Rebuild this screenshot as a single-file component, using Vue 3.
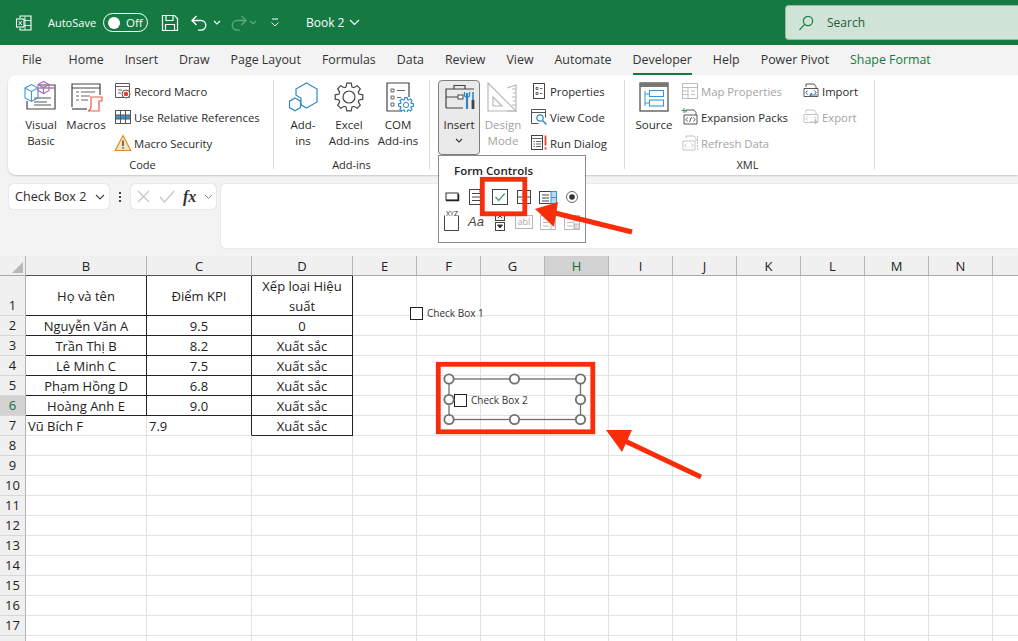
<script setup>
const tabs = ['File', 'Home', 'Insert', 'Draw', 'Page Layout', 'Formulas', 'Data', 'Review', 'View', 'Automate', 'Developer', 'Help', 'Power Pivot', 'Shape Format']

// O is only a sliver at the right edge, so its heading stays empty
const columns = ['B', 'C', 'D', 'E', 'F', 'G', 'H', 'I', 'J', 'K', 'L', 'M', 'N', '']

// only rows 1-7 hold data, the rest of the sheet is empty
const tableRows = [
  ['Họ và tên', 'Điểm KPI', 'Xếp loại Hiệu suất'],
  ['Nguyễn Văn A', '9.5', '0'],
  ['Trần Thị B', '8.2', 'Xuất sắc'],
  ['Lê Minh C', '7.5', 'Xuất sắc'],
  ['Phạm Hồng D', '6.8', 'Xuất sắc'],
  ['Hoàng Anh E', '9.0', 'Xuất sắc'],
  ['Vũ Bích F', '7.9', 'Xuất sắc']
]

const rows = Array.from({ length: 18 }, (_, i) => i + 1)

const cellText = (row, col) => {
  const data = tableRows[row - 1]
  return data && col < 3 ? data[col] : ''
}

const cellClass = (row, col) => {
  const list = []
  if (row <= 6 && col < 3) list.push('cell--framed', 'cell--center')
  if (row === 7 && col === 2) list.push('cell--framed', 'cell--center')
  if (row === 7 && col === 1) list.push('cell--edge')
  if (row === 7 && col < 2) list.push('cell--left')
  if (row === 1 && col < 2) list.push('cell--middle')
  return list
}

// gear outline used by the add-in icons
const gearPath = (cx, cy, outer, inner, teeth) => {
  const pts = []
  const step = (Math.PI * 2) / teeth
  for (let i = 0; i < teeth; i++) {
    const a = i * step - Math.PI / 2
    const spots = [[-0.3, inner], [-0.16, outer], [0.16, outer], [0.3, inner]]
    spots.forEach(([off, r]) => {
      const t = a + off * step * 1.25
      pts.push((cx + Math.cos(t) * r).toFixed(1) + ' ' + (cy + Math.sin(t) * r).toFixed(1))
    })
  }
  return 'M' + pts.join('L') + 'Z'
}

const bigGear = gearPath(18, 17, 14, 10.5, 8)
const smallGear = gearPath(26, 25, 7.5, 5.5, 8)

const handles = [
  [449, 379], [514.5, 379], [580.5, 379],
  [449, 399.5], [580.5, 399.5],
  [449, 419.5], [514.5, 419.5], [580.5, 419.5]
]
</script>

<template>
  <div class="app">
    <header class="titlebar">
      <svg class="titlebar__logo" width="18" height="18" viewBox="0 0 18 18" fill="none" stroke="#fff" stroke-width="1.1">
        <path d="M5 4V2h11v14H5v-2" />
        <path d="M10 2v14M5 6.5h11M5 11.5h11" stroke-width=".8" />
        <rect x="1.5" y="5" width="7.5" height="8" fill="#147a42" />
        <path d="M3.8 7.2l3 3.8M6.8 7.2l-3 3.8" stroke-width="1" />
      </svg>
      <span class="titlebar__autosave">AutoSave</span>
      <div class="toggle"><span class="toggle__dot"></span><span>Off</span></div>
      <svg class="titlebar__save" width="18" height="18" viewBox="0 0 18 18" fill="none" stroke="#fff" stroke-width="1.2">
        <path d="M1.5 1.5h12l3 3v12h-15z" />
        <path d="M5 1.5v5h7v-5M4.5 16.5v-6h9v6" />
      </svg>
      <svg class="titlebar__undo" width="18" height="18" viewBox="0 0 18 18" fill="none" stroke="#fff" stroke-width="1.4">
        <path d="M6.5 2L2 6.5l4.5 4.5M2 6.5h9a4.8 4.8 0 0 1 0 9.6H8" />
      </svg>
      <svg class="titlebar__caret" width="8" height="5" viewBox="0 0 8 5" fill="none" stroke="#fff" stroke-width="1.1"><path d="M1 1l3 3 3-3" /></svg>
      <svg class="titlebar__redo" width="18" height="18" viewBox="0 0 18 18" fill="none" stroke="#5fa77f" stroke-width="1.4">
        <path d="M11.5 2L16 6.5 11.5 11M16 6.5H7a4.8 4.8 0 0 0 0 9.6h3" />
      </svg>
      <svg class="titlebar__caret titlebar__caret--dim" width="8" height="5" viewBox="0 0 8 5" fill="none" stroke="#5fa77f" stroke-width="1.1"><path d="M1 1l3 3 3-3" /></svg>
      <svg class="titlebar__more" width="10" height="9" viewBox="0 0 10 9" fill="none" stroke="#fff" stroke-width="1"><path d="M2 1h6" /><path d="M1.5 4.5L5 8l3.5-3.5" /></svg>
      <span class="titlebar__book">Book 2</span>
      <svg class="titlebar__chev" width="11" height="7" viewBox="0 0 11 7" fill="none" stroke="#fff" stroke-width="1.2"><path d="M1 1l4.5 4.5L10 1" /></svg>
      <div class="search">
        <svg width="16" height="16" viewBox="0 0 16 16" fill="none" stroke="#1a7a45" stroke-width="1.2">
          <circle cx="10" cy="6" r="4.6" />
          <path d="M6.6 9.4L1.5 14.8" />
        </svg>
        <span>Search</span>
      </div>
    </header>

    <nav class="tabs">
      <span v-for="tab in tabs" :key="tab" class="tabs__item" :class="{ 'tabs__item--active': tab === 'Developer', 'tabs__item--shape': tab === 'Shape Format', 'tabs__item--file': tab === 'File' }">{{ tab }}</span>
    </nav>

    <section class="ribbon">
      <div class="group group--code">
        <div class="group__body">
          <div class="big big--vb">
            <svg width="36" height="32" viewBox="0 0 36 32" fill="none">
              <path d="M15 5h17v24H4V21" stroke="#444" stroke-width="1.2" />
              <path d="M16 8h15M11 18h17M11 22h13M11 25h17" stroke="#555" />
              <path d="M2 8l6.5-3.5L15 8v10l-6.5 3.5L2 18zM2 8l6.5 3.5L15 8M8.5 11.5v10" stroke="#3a96d4" stroke-width="1.1" />
              <path d="M15 4.5L20.5 1.5 26 4.5v6l-5.5 3L15 10.5zM15 4.5l5.5 3 5.5-3M20.5 7.5v6" stroke="#b162c6" stroke-width="1.1" />
            </svg>
            <span>Visual<br />Basic</span>
          </div>
          <div class="big big--macros">
            <svg width="36" height="32" viewBox="0 0 36 32" fill="none">
              <path d="M4 27V4h28v11" stroke="#444" stroke-width="1.2" />
              <path d="M4 8h28" stroke="#444" />
              <path d="M8 12h3M13 12h14M8 16h3M13 16h9M8 20h3M13 20h7" stroke="#666" />
              <path d="M4 29h15" stroke="#444" stroke-width="1.2" />
              <path d="M23 17h11v4h-3v10H20c2-1 3-2 3-4z" stroke="#ef5a4a" stroke-width="1.2" fill="#fff" />
            </svg>
            <span>Macros</span>
          </div>
          <div class="small-list small-list--code">
            <div class="small">
              <svg width="18" height="18" viewBox="0 0 18 18" fill="none">
                <path d="M1.5 1.5h14v14h-14z" stroke="#555" />
                <path d="M1.5 4.5h14M4 8h4M4 11h3" stroke="#666" />
                <circle cx="12" cy="12" r="4" fill="#fff" stroke="#555" />
                <circle cx="12" cy="12" r="2.3" fill="#e8412e" />
              </svg>
              <span>Record Macro</span>
            </div>
            <div class="small">
              <svg width="18" height="18" viewBox="0 0 18 18" fill="none">
                <rect x="1.5" y="2.5" width="15" height="13" stroke="#555" />
                <rect x="2" y="7" width="14" height="4" fill="#3f8fd2" />
                <path d="M6.5 2.5v13M11.5 2.5v13M1.5 7h15M1.5 11h15" stroke="#555" />
              </svg>
              <span>Use Relative References</span>
            </div>
            <div class="small">
              <svg width="18" height="18" viewBox="0 0 18 18" fill="none">
                <path d="M9 1.5L16.8 16.5H1.2z" fill="#fbe3b8" stroke="#d98a28" stroke-width="1.1" />
                <path d="M9 6.5v5.5M9 13.2v1.6" stroke="#333" stroke-width="1.3" />
              </svg>
              <span>Macro Security</span>
            </div>
          </div>
        </div>
        <div class="group__label group__label--code">Code</div>
      </div>

      <div class="group group--addins">
        <div class="group__body">
          <div class="big big--addin">
            <svg width="36" height="32" viewBox="0 0 36 32" fill="none" stroke="#2f87c9" stroke-width="1.2">
              <path d="M21.5 3L32 9v13l-10.5 6-5.500-3.200V18l-5-2.800V9z" />
              <path d="M10 18l5.500 3.200v6.400L10 30.800l-5.500-3.200v-6.400z" />
            </svg>
            <span>Add-<br />ins</span>
          </div>
          <div class="big big--addin">
            <svg width="36" height="32" viewBox="0 0 36 32" fill="none" stroke="#444" stroke-width="1.2">
              <path :d="bigGear" />
              <circle cx="18" cy="17" r="6" />
            </svg>
            <span>Excel<br />Add-ins</span>
          </div>
          <div class="big big--com">
            <svg width="36" height="32" viewBox="0 0 36 32" fill="none">
              <path d="M22 31H7V3h22v14" stroke="#444" stroke-width="1.2" />
              <path d="M11 9h3v3h-3zM11 16h3v3h-3zM11 23h3v3h-3zM17 10.5h8M17 17.5h4" stroke="#666" />
              <path :d="smallGear" stroke="#2f87c9" stroke-width="1.1" fill="#fff" />
              <circle cx="26" cy="25" r="2.6" stroke="#2f87c9" />
            </svg>
            <span>COM<br />Add-ins</span>
          </div>
        </div>
        <div class="group__label">Add-ins</div>
      </div>

      <div class="group group--dev">
        <div class="group__body">
          <div class="insert">
            <svg width="36" height="32" viewBox="0 0 36 32" fill="none">
              <path d="M13 8V4.500h11V8" stroke="#444" stroke-width="1.2" />
              <path d="M5 27V8h28M5 27h17M5 16h14" stroke="#444" stroke-width="1.2" />
              <rect x="17" y="14" width="5" height="4" fill="#fff" stroke="#444" />
              <path d="M26 12v6M26 18v10" stroke="#2f87c9" stroke-width="2.2" />
              <path d="M23.5 11v4l2.5 2 2.5-2v-4" stroke="#2f87c9" stroke-width="1.3" />
              <path d="M32 11v8" stroke="#2f87c9" stroke-width="1.6" />
              <path d="M32 19v9" stroke="#444" stroke-width="2.8" />
            </svg>
            <span>Insert</span>
            <svg class="insert__caret" width="8" height="5" viewBox="0 0 8 5" fill="none" stroke="#333" stroke-width="1.1"><path d="M1 1l3 3 3-3" /></svg>
          </div>
          <div class="big big--design is-disabled">
            <svg width="36" height="32" viewBox="0 0 36 32" fill="none" stroke="#b5b5b5" stroke-width="1.1">
              <path d="M3 3l28 28H3z" />
              <path d="M8 17l9 9H8z" />
              <path d="M22 8l9-3v26h-9" />
              <path d="M27 9h4M28 13h3M27 17h4M28 21h3M27 25h4" />
            </svg>
            <span>Design<br />Mode</span>
          </div>
          <div class="small-list small-list--dev">
            <div class="small">
              <svg width="18" height="18" viewBox="0 0 18 18" fill="none" stroke="#444">
                <rect x="3.5" y="1.5" width="11" height="15" />
                <path d="M6 5.500h2v2H6zM6 10.500h2v2H6zM10 6.500h2.500M10 11.500h2.500" stroke-width=".8" />
              </svg>
              <span>Properties</span>
            </div>
            <div class="small">
              <svg width="18" height="18" viewBox="0 0 18 18" fill="none">
                <path d="M1.5 15.5v-14h14v8" stroke="#555" />
                <path d="M1.5 4.5h14M1.5 15.5h7" stroke="#555" />
                <circle cx="10" cy="10" r="3.2" stroke="#2f87c9" stroke-width="1.2" />
                <path d="M12.5 12.5l4 4" stroke="#2f87c9" stroke-width="1.5" />
              </svg>
              <span>View Code</span>
            </div>
            <div class="small">
              <svg width="18" height="18" viewBox="0 0 18 18" fill="none">
                <rect x="1.5" y="1.5" width="11" height="14" stroke="#444" />
                <path d="M1.5 4.5h11M3.5 7.5h1.5M6 7.5h5M3.500 10h1.500M6 10h5M3.5 12.5h1.5M6 12.5h5" stroke="#666" />
                <path d="M15.5 1.5v10M15.5 13.2v2.3" stroke="#e8412e" stroke-width="1.8" />
              </svg>
              <span>Run Dialog</span>
            </div>
          </div>
        </div>
        <div class="group__label"></div>
      </div>

      <div class="group group--xml">
        <div class="group__body">
          <div class="big big--source">
            <svg width="36" height="32" viewBox="0 0 36 32" fill="none">
              <rect x="4" y="3" width="28" height="28" stroke="#444" stroke-width="1.2" />
              <rect x="4" y="3" width="28" height="4" fill="#777" />
              <path d="M9 11v15M9 14h5M9 23h5" stroke="#3a96d4" />
              <rect x="13.5" y="10.5" width="14" height="6" stroke="#3a96d4" stroke-width="1.1" />
              <rect x="13.5" y="20" width="14" height="6" stroke="#3a96d4" stroke-width="1.1" />
            </svg>
            <span>Source</span>
          </div>
          <div class="small-list small-list--xml">
            <div class="small is-disabled">
              <svg width="18" height="18" viewBox="0 0 18 18" fill="none" stroke="#bdbdbd">
                <rect x="1.5" y="1.5" width="15" height="15" />
                <path d="M1.5 5.5h15M7 5.5v11M1.5 9h5.500M1.5 12.5h5.500M10 9h4M10 12.5h4" />
              </svg>
              <span>Map Properties</span>
            </div>
            <div class="small">
              <svg width="18" height="18" viewBox="0 0 18 18" fill="none" stroke="#444">
                <path d="M5 4.5V2h8l2 2.5V7M3 7h13v9H3z" stroke-width=".9" />
                <path d="M6.5 9.5L5 11.5l1.500 2M12.500 9.500l1.500 2-1.500 2M10.500 9l-2 5" stroke-width=".9" />
                <path d="M3 0v5M.5 2.500h5" stroke="#2c9a5a" stroke-width="1" />
              </svg>
              <span>Expansion Packs</span>
            </div>
            <div class="small is-disabled">
              <svg width="18" height="18" viewBox="0 0 18 18" fill="none" stroke="#bdbdbd">
                <path d="M5 4.5V2h8l2 2.5V7M2 7h12v9H2z" stroke-width=".9" />
                <path d="M5.5 9.5L4 11.5l1.500 2M10.500 9.500l1.500 2-1.500 2" stroke-width=".9" />
                <path d="M16.5 2v14" stroke-dasharray="2 1" />
              </svg>
              <span>Refresh Data</span>
            </div>
          </div>
          <div class="small-list small-list--xml2">
            <div class="small">
              <svg width="18" height="18" viewBox="0 0 18 18" fill="none" stroke="#444">
                <path d="M4 5V2h8l2 2.500V7M2 6.500h14v8H2z" stroke-width=".9" />
                <path d="M5.5 8.5L4 10.5l1.500 2M12.500 8.500l1.500 2-1.500 2" stroke-width=".9" />
                <path d="M15 13H8M10 11l-2 2 2 2" stroke="#2f87c9" stroke-width="1.1" />
              </svg>
              <span>Import</span>
            </div>
            <div class="small is-disabled">
              <svg width="18" height="18" viewBox="0 0 18 18" fill="none" stroke="#bdbdbd">
                <path d="M4 5V2h8l2 2.500V7M2 6.500h14v8H2z" stroke-width=".9" />
                <path d="M5.5 8.5L4 10.5l1.500 2M12.500 8.500l1.500 2-1.500 2" stroke-width=".9" />
                <path d="M8 14h7M13 12l2 2-2 2" stroke-width="1.1" />
              </svg>
              <span>Export</span>
            </div>
          </div>
        </div>
        <div class="group__label group__label--xml">XML</div>
      </div>
    </section>

    <section class="formula">
      <div class="namebox">
        <span>Check Box 2</span>
        <svg width="10" height="6" viewBox="0 0 10 6" fill="none" stroke="#444" stroke-width="1.1"><path d="M1 1l4 4 4-4" /></svg>
      </div>
      <div class="formula__dots"><i></i><i></i><i></i></div>
      <div class="fxbox">
        <svg width="15" height="15" viewBox="0 0 15 15" fill="none" stroke="#c4c4c4" stroke-width="1.2"><path d="M2 2l11 11M13 2L2 13" /></svg>
        <svg width="16" height="15" viewBox="0 0 16 15" fill="none" stroke="#c4c4c4" stroke-width="1.2"><path d="M1 8l4.500 5L15 2" /></svg>
        <span class="fxbox__fx">fx</span>
        <svg width="9" height="6" viewBox="0 0 9 6" fill="none" stroke="#888" stroke-width="1"><path d="M1 1l3.500 3.500L8 1" /></svg>
      </div>
      <div class="formula__input"></div>
    </section>

    <section class="sheet">
      <div class="corner"><span class="corner__tri"></span></div>
      <div v-for="col in columns" :key="col" class="colhead" :class="{ 'colhead--on': col === 'H', 'colhead--dark': col === 'B' || col === 'C' || col === 'D' }">{{ col }}</div>
      <template v-for="row in rows" :key="row">
        <div class="rowhead" :class="{ 'rowhead--tall': row === 1, 'rowhead--on': row === 6 }">{{ row < 18 ? row : '' }}</div>
        <div
          v-for="(col, idx) in columns"
          :key="col"
          class="cell"
          :class="[cellClass(row, idx), { 'cell--tall': row === 1 }]"
        ><span>{{ cellText(row, idx) }}</span></div>
      </template>

      <label class="checkbox checkbox--one"><span class="checkbox__box"></span>Check Box 1</label>
      <label class="checkbox checkbox--two"><span class="checkbox__box"></span>Check Box 2</label>
    </section>

    <div class="dropdown">
      <div class="dropdown__title">Form Controls</div>
      <div class="dropdown__grid">
        <span><svg width="20" height="20" viewBox="0 0 20 20" fill="none"><rect x="4" y="6" width="12" height="7" stroke="#333" /><path d="M4 13.5h12.5V7" stroke="#222" stroke-width="1.5" /></svg></span>
        <span><svg width="20" height="20" viewBox="0 0 20 20" fill="none" stroke="#444"><rect x="3.5" y="2.5" width="13" height="15" /><path d="M6 6.5h8M6 10h8M6 13.5h8" /><path d="M14 2.5h2.5v3H14z" fill="#444" /></svg></span>
        <span><svg width="20" height="20" viewBox="0 0 20 20" fill="none"><rect x="2.5" y="2.5" width="15" height="15" stroke="#444" /><path d="M5.5 10l3.2 3.5 6-7" stroke="#3fa06a" stroke-width="1.2" /></svg></span>
        <span><svg width="20" height="20" viewBox="0 0 20 20" fill="none" stroke="#444"><rect x="3.5" y="3.5" width="13" height="13" /><path d="M3.5 10h13" /><path d="M8 7.5l2-2 2 2M8 12.5l2 2 2-2" /></svg></span>
        <span><svg width="20" height="20" viewBox="0 0 20 20" fill="none" stroke="#444"><rect x="1.5" y="4.5" width="17" height="12" /><path d="M4 8h7M4 11h7M4 14h7" /><rect x="13" y="4.5" width="5.5" height="12" fill="#bcd8ee" stroke="#3a96d4" /><path d="M13 10.5h5.500" stroke="#3a96d4" /></svg></span>
        <span><svg width="20" height="20" viewBox="0 0 20 20" fill="none"><circle cx="10" cy="10" r="5.5" stroke="#666" /><circle cx="10" cy="10" r="2.8" fill="#333" /></svg></span>

        <span class="dropdown__xyz"><svg width="20" height="20" viewBox="0 0 20 20" fill="none" stroke="#444"><path d="M2.500 3.500V18.500h14V3.500" /></svg><em>XYZ</em></span>
        <span class="dropdown__aa">Aa</span>
        <span><svg width="20" height="20" viewBox="0 0 20 20" fill="none" stroke="#444"><rect x="5.5" y="1.5" width="9" height="7" fill="#f1f1f1" /><path d="M8 6l2-2 2 2" /><rect x="5.5" y="10.5" width="9" height="8" /><path d="M7.500 13h5L10 16z" fill="#222" /></svg></span>
        <span class="is-dim"><svg width="20" height="20" viewBox="0 0 20 20" fill="none" stroke="#b5b5b5"><rect x="1.5" y="3.5" width="17" height="13" /></svg><em class="dropdown__abl">abl</em></span>
        <span class="is-dim"><svg width="20" height="20" viewBox="0 0 20 20" fill="none" stroke="#bbb"><rect x="2.5" y="3.5" width="15" height="14" /><path d="M5 7h6M5 10.500h6M5 14h6M13 3.500v14" /><path d="M13.500 4h4v3h-4z" fill="#ddd" /></svg></span>
        <span class="is-dim"><svg width="20" height="20" viewBox="0 0 20 20" fill="none" stroke="#bbb"><rect x="2.5" y="3.5" width="15" height="14" /><path d="M5 7h6M5 10.500h6M5 14h6M12 3.500v14" /><path d="M12.500 4h5v5h-5zM12.500 12h5v5h-5z" fill="#ddd" /></svg></span>
      </div>
    </div>

    <svg class="marks" width="1018" height="641" viewBox="0 0 1018 641" fill="none">
      <!-- selection frame of Check Box 2 -->
      <rect x="449" y="379" width="131.5" height="40.5" stroke="#6f6f6f" stroke-width="1.3" />
      <circle v-for="h in handles" :key="h.join()" :cx="h[0]" :cy="h[1]" r="4.7" fill="#fff" stroke="#6f6f6f" stroke-width="1.8" />
      <!-- red call-outs -->
      <rect x="482.3" y="179.3" width="42.5" height="34.5" stroke="#fa2d0a" stroke-width="4.8" />
      <rect x="438.3" y="364.3" width="154.5" height="67.5" stroke="#fa2d0a" stroke-width="4.8" />
      <path d="M632 232L555 213" stroke="#fa2d0a" stroke-width="5" />
      <path d="M535 209L558 202L554 227Z" fill="#fa2d0a" />
      <path d="M701 477L625 441" stroke="#fa2d0a" stroke-width="5" />
      <path d="M606 430L632 430L622 452Z" fill="#fa2d0a" />
    </svg>
  </div>
</template>

<style>
html,
body {
  margin: 0;
  background: #f3f3f3;
}
</style>

<style scoped>
.app {
  position: relative;
  width: 1018px;
  height: 641px;
  overflow: hidden;
  background: #f3f3f3;
  font-family: "Open Sans", "Noto Sans", sans-serif;
  font-size: 12px;
  color: #2b2b2b;
}

/* title bar */
.titlebar {
  display: flex;
  align-items: center;
  height: 45px;
  padding-left: 15px;
  background: #147a42;
  color: #fff;
  box-sizing: border-box;
}

.titlebar__logo {
  margin-right: 15px;
}

.titlebar__autosave {
  width: 50px;
  font-size: 11px;
}

.toggle {
  display: flex;
  align-items: center;
  gap: 6px;
  width: 45px;
  height: 19px;
  margin-left: 5px;
  padding-left: 4px;
  box-sizing: border-box;
  border: 1px solid #fff;
  border-radius: 10px;
  font-size: 11.5px;
}

.toggle__dot {
  width: 12px;
  height: 12px;
  border-radius: 50%;
  background: #fff;
}

.titlebar__save {
  margin-left: 13px;
}

.titlebar__undo {
  margin-left: 11px;
}

.titlebar__caret {
  margin-left: 5px;
}

.titlebar__caret--dim {
  margin-left: 1px;
}

.titlebar__redo {
  margin-left: 9px;
}

.titlebar__more {
  margin-left: 13px;
}

.titlebar__book {
  margin-left: 26px;
  font-size: 12px;
}

.titlebar__chev {
  margin-left: 5px;
}

.search {
  display: flex;
  align-items: center;
  gap: 13px;
  width: 233px;
  height: 35px;
  margin-left: auto;
  padding-left: 12px;
  box-sizing: border-box;
  border: 1px solid #98b9a6;
  border-right: 0;
  border-radius: 4px 0 0 4px;
  background: #cfe3d7;
  color: #1f5c3a;
  font-size: 12px;
}

/* tabs */
.tabs {
  display: flex;
  align-items: center;
  gap: 21px;
  height: 30px;
  padding-left: 22px;
  font-size: 12.4px;
  color: #333;
}

.tabs__item {
  position: relative;
  line-height: 30px;
}

.tabs__item--file {
  margin-right: 6px;
}

.tabs__item--active {
  font-weight: 500;
}

.tabs__item--active::after {
  content: "";
  position: absolute;
  left: 0;
  right: 0;
  bottom: 0;
  height: 2px;
  background: #147a42;
}

.tabs__item--shape {
  color: #147a42;
}

/* ribbon */
.ribbon {
  display: flex;
  height: 100px;
  margin-left: 8px;
  padding-top: 5px;
  box-sizing: border-box;
  border-radius: 8px 0 0 8px;
  background: #fff;
  box-shadow: 0 1px 2px rgba(0, 0, 0, 0.18);
}

.group {
  position: relative;
  display: flex;
  flex-direction: column;
  height: 89px;
  box-sizing: border-box;
  border-right: 1px solid #dadada;
}

.group--code {
  width: 266px;
}

.group--addins {
  width: 156px;
}

.group--dev {
  width: 195px;
}

.group--xml {
  width: 250px;
}

.group__body {
  display: flex;
  flex: 1;
}

/* the label sits a little below the end of the separator */
.group__label {
  height: 17px;
  margin-bottom: -4px;
  line-height: 17px;
  text-align: center;
  font-size: 11px;
}

.group__label--code {
  padding-left: 4px;
}

.group__label--xml {
  position: absolute;
  left: 62px;
  bottom: 0;
  width: 121px;
}

.group--code .group__body {
  padding-left: 10px;
}

.group--addins .group__body {
  padding-left: 6px;
}

.group--dev .group__body {
  padding-left: 8px;
}

.group--xml .group__body {
  padding-left: 4px;
}

.big {
  display: flex;
  flex-direction: column;
  align-items: center;
  text-align: center;
  line-height: 16px;
  font-size: 11.5px;
}

.big span {
  margin-top: 5px;
}

.big--vb,
.big--addin {
  width: 46px;
}

.big--macros {
  width: 44px;
}

.big--com {
  width: 52px;
}

.big--design {
  width: 44px;
  margin-left: 1px;
}

.big--source {
  width: 50px;
}

.is-disabled {
  color: #a3a3a3;
}

.insert {
  display: flex;
  flex-direction: column;
  align-items: center;
  width: 42px;
  height: 75px;
  box-sizing: border-box;
  border: 1px solid #7d7d7d;
  border-radius: 4px;
  background: #eaeaea;
  font-size: 11.5px;
  line-height: 16px;
}

.insert span {
  margin-top: 4px;
}

.insert__caret {
  margin-top: 5px;
}

.small-list {
  display: flex;
  flex-direction: column;
  gap: 8px;
  padding-top: 2px;
}

.small-list--code {
  margin-left: 6px;
}

.small-list--dev {
  margin-left: 5px;
}

.small-list--xml {
  margin-left: 2px;
  width: 121px;
}

.small {
  display: flex;
  align-items: center;
  gap: 2px;
  height: 18px;
  white-space: nowrap;
  font-size: 11.3px;
}

/* formula bar */
.formula {
  display: flex;
  height: 65px;
  margin-top: 9px;
  padding-left: 9px;
  box-sizing: border-box;
}

.namebox {
  display: flex;
  align-items: center;
  justify-content: space-between;
  width: 100px;
  height: 25px;
  padding: 0 4px 0 6px;
  box-sizing: border-box;
  border-radius: 4px;
  background: #fff;
  box-shadow: 0 0 1px rgba(0, 0, 0, 0.35);
  font-size: 12.6px;
}

.formula__dots {
  display: flex;
  flex-direction: column;
  gap: 2px;
  width: 22px;
  height: 25px;
  align-items: center;
  justify-content: center;
}

.formula__dots i {
  width: 2px;
  height: 2px;
  background: #444;
}

.fxbox {
  display: flex;
  align-items: center;
  gap: 8px;
  width: 85px;
  height: 25px;
  padding-left: 5px;
  box-sizing: border-box;
  border-radius: 4px;
  background: #fff;
  box-shadow: 0 0 1px rgba(0, 0, 0, 0.35);
}

.fxbox__fx {
  font-family: "Liberation Serif", serif;
  font-style: italic;
  font-weight: 700;
  font-size: 16px;
  color: #333;
}

.formula__input {
  flex: 1;
  height: 64px;
  margin-left: 5px;
  border-radius: 4px 0 0 4px;
  background: #fff;
  box-shadow: 0 0 1px rgba(0, 0, 0, 0.35);
}

/* sheet */
.sheet {
  position: relative;
  display: grid;
  grid-template-columns: 26px 121px 105px 101px repeat(11, 64px);
  grid-auto-rows: min-content;
  margin-top: 7px;
  width: 1200px;
  background: #fff;
  font-size: 13px;
  color: #222;
}

.corner {
  position: relative;
  height: 20px;
  box-sizing: border-box;
  background: #f0f0f0;
  border-right: 1px solid #b5b5b5;
  border-bottom: 1px solid #a8a8a8;
}

.corner__tri {
  position: absolute;
  right: 2px;
  bottom: 2px;
  width: 0;
  height: 0;
  border-left: 11px solid transparent;
  border-bottom: 11px solid #b8b8b8;
}

.colhead {
  height: 20px;
  line-height: 20px;
  text-align: center;
  box-sizing: border-box;
  background: #f0f0f0;
  border-right: 1px solid #b5b5b5;
  border-bottom: 1px solid #a8a8a8;
}

.colhead--dark {
  border-bottom-color: #555;
}

.colhead--on {
  background: #d2d2d2;
  color: #0f6b3c;
}

.rowhead {
  display: flex;
  align-items: flex-end;
  justify-content: center;
  height: 20px;
  line-height: 20px;
  box-sizing: border-box;
  background: #f0f0f0;
  border-right: 1px solid #b0b0b0;
  border-bottom: 1px solid #d6d6d6;
}

.rowhead--tall {
  height: 40px;
}

.rowhead--on {
  background: #d2d2d2;
  color: #0f6b3c;
}

.cell {
  height: 20px;
  line-height: 20px;
  box-sizing: border-box;
  border-right: 1px solid #e2e2e2;
  border-bottom: 1px solid #e2e2e2;
  white-space: nowrap;
}

.cell--tall {
  height: 40px;
}

.cell--framed {
  border-color: #222;
}

.cell--center {
  text-align: center;
  white-space: normal;
}

.cell--middle {
  display: flex;
  align-items: center;
  justify-content: center;
}

.cell--left {
  padding-left: 2px;
}

.cell--edge {
  border-right-color: #222;
}

.checkbox {
  position: absolute;
  display: flex;
  align-items: center;
  gap: 4px;
  font-size: 10px;
  color: #333;
  line-height: 14px;
}

.checkbox--one {
  left: 410px;
  top: 50px;
}

.checkbox--two {
  left: 454px;
  top: 137px;
}

.checkbox__box {
  width: 13px;
  height: 13px;
  box-sizing: border-box;
  border: 1px solid #222;
  background: #fff;
}

/* form controls popup */
.dropdown {
  position: absolute;
  left: 438px;
  top: 155px;
  width: 148px;
  height: 88px;
  box-sizing: border-box;
  border: 1px solid #8a8a8a;
  background: #fff;
}

.dropdown__title {
  padding: 7px 0 0 15px;
  font-size: 11.5px;
  font-weight: 600;
  line-height: 16px;
  color: #222;
}

.dropdown__grid {
  display: grid;
  grid-template-columns: repeat(6, 24px);
  grid-auto-rows: 25px;
  margin-top: 5px;
  padding-left: 1px;
}

.dropdown__grid > span {
  position: relative;
  display: flex;
  align-items: center;
  justify-content: center;
}

.dropdown__xyz em {
  position: absolute;
  top: 1px;
  left: 6px;
  font-size: 7px;
  font-style: normal;
  background: #fff;
  line-height: 8px;
}

.dropdown__aa {
  font-family: "Liberation Sans", sans-serif;
  font-style: italic;
  font-size: 13px;
  color: #444;
}

.dropdown__abl {
  position: absolute;
  font-size: 9px;
  font-style: normal;
  color: #aaa;
}

.marks {
  position: absolute;
  left: 0;
  top: 0;
  pointer-events: none;
}
</style>
